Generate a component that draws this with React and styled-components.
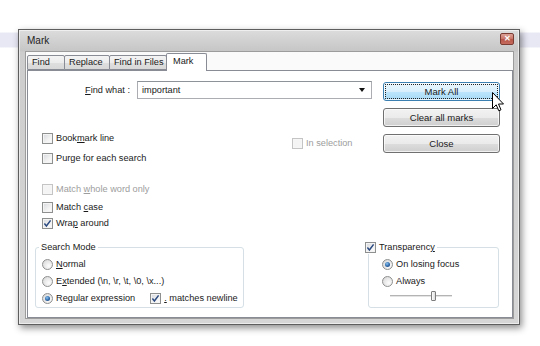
import React from "react";
import styled, { createGlobalStyle } from "styled-components";

const GlobalStyle = createGlobalStyle`
  * {
    box-sizing: border-box;
  }

  html,
  body {
    margin: 0;
    padding: 0;
  }

  body {
    width: 540px;
    height: 346px;
    overflow: hidden;
    background: linear-gradient(
      to bottom,
      #fff 0,
      #fff 32px,
      #e8e8f5 33px,
      #e8e8f5 47px,
      #fff 48px,
      #fff 100%
    );
    font-family: "Liberation Sans", Arial, sans-serif;
    font-size: 9.2px;
    color: #1a1a1a;
  }
`;

const Desktop = styled.div`
  padding: 29px 0 0 18px;
`;

const Window = styled.div`
  width: 502px;
  height: 296px;
  display: flex;
  flex-direction: column;
  border: 1px solid #5e5e5e;
  background: linear-gradient(
    to bottom,
    #dcdcdc 0,
    #c6c6c6 21px,
    #cdcdcd 22px,
    #d6d6d6 100%
  );
  box-shadow: inset 0 0 0 1px rgba(255, 255, 255, 0.55),
    2px 3px 7px rgba(0, 0, 0, 0.45);
`;

const TitleBar = styled.div`
  height: 21px;
  display: flex;
  align-items: center;
  padding: 0 5px 0 8px;
  font-size: 10px;
  color: #1e1e1e;
`;

const CloseButton = styled.div`
  width: 14px;
  height: 12px;
  margin-left: auto;
  align-self: flex-start;
  margin-top: 3px;
  border: 1px solid #7a3c33;
  border-radius: 2px;
  background: linear-gradient(to bottom, #dca196 0, #c87466 50%, #b6574a 51%, #c46a5d 100%);
  display: flex;
  align-items: center;
  justify-content: center;
  color: #fff;
  font-size: 8px;
  font-weight: bold;
  line-height: 1;
`;

const Client = styled.div`
  flex: 1;
  display: flex;
  flex-direction: column;
  margin: 0 5px 5px 6px;
  border: 1px solid #9c9c9c;
  background: #fafafa;
`;

const TabStrip = styled.div`
  height: 18px;
  display: flex;
  align-items: flex-end;
  padding-left: 1px;
`;

const Tab = styled.div`
  position: relative;
  width: ${(p) => p.$w}px;
  height: ${(p) => (p.$active ? 18 : 15)}px;
  margin-left: -1px;
  margin-bottom: ${(p) => (p.$active ? -1 : 0)}px;
  padding-left: ${(p) => (p.$active ? 6 : 4)}px;
  border: 1px solid #898c95;
  border-bottom: ${(p) => (p.$active ? "none" : "1px solid #898c95")};
  border-radius: 2px 2px 0 0;
  background: ${(p) =>
    p.$active
      ? "#fff"
      : "linear-gradient(to bottom, #f4f4f4 0, #ececec 50%, #dfdfdf 51%, #d8d8d8 100%)"};
  z-index: ${(p) => (p.$active ? 1 : 0)};
  line-height: ${(p) => (p.$active ? 15 : 13)}px;
  white-space: nowrap;

  &:first-child {
    margin-left: 0;
  }
`;

const Panel = styled.div`
  flex: 1;
  display: flex;
  flex-direction: column;
  margin-left: 1px;
  padding: 10px 12px 0 0;
  border: 1px solid #898c95;
  background: #fff;
`;

const TopSection = styled.div`
  display: flex;
  justify-content: space-between;
`;

const LeftCol = styled.div`
  width: 344px;
  display: flex;
  flex-direction: column;
`;

const FindRow = styled.div`
  display: flex;
  align-items: center;
  height: 18px;
`;

const FieldLabel = styled.label`
  width: 102px;
  margin-right: 7px;
  text-align: right;
  white-space: nowrap;
`;

const Combo = styled.div`
  width: 235px;
  height: 18px;
  display: flex;
  align-items: center;
  padding: 0 4px;
  border: 1px solid #abadb3;
  border-top-color: #8e9299;
  background: #fff;
`;

const ComboText = styled.span`
  flex: 1;
`;

const ComboArrow = styled.span`
  width: 0;
  height: 0;
  border-left: 3px solid transparent;
  border-right: 3px solid transparent;
  border-top: 4px solid #111;
  margin-right: 2px;
`;

const OptionsRow = styled.div`
  display: flex;
  margin-top: 32px;
`;

const CheckCol = styled.div`
  width: 264px;
  padding-left: 14px;
  display: flex;
  flex-direction: column;
  gap: 6px;
`;

const SideOption = styled.div`
  margin-top: 5px;
`;

const ButtonCol = styled.div`
  position: relative;
  width: 117px;
  margin-top: 1px;
  display: flex;
  flex-direction: column;
  gap: 7px;
`;

const Button = styled.div`
  position: relative;
  height: 19px;
  display: flex;
  align-items: center;
  justify-content: center;
  font-size: 9.5px;
  border: 1px solid ${(p) => (p.$hot ? "#3c7fb1" : "#707070")};
  border-radius: 3px;
  background: ${(p) =>
    p.$hot
      ? "linear-gradient(to bottom, #eaf6fd 0, #d9f0fc 50%, #bee6fd 51%, #a7d9f5 100%)"
      : "linear-gradient(to bottom, #f2f2f2 0, #ebebeb 50%, #dddddd 51%, #cfcfcf 100%)"};
  box-shadow: inset 0 0 0 1px rgba(255, 255, 255, 0.7);
  outline: ${(p) => (p.$focus ? "1px dotted #222" : "none")};
  outline-offset: -3px;
`;

const Cursor = styled.svg`
  position: absolute;
  left: 109px;
  top: 10px;
  width: 13px;
  height: 20px;
  z-index: 2;
`;

const LowerChecks = styled.div`
  display: flex;
  flex-direction: column;
  padding-left: 14px;
  margin-top: 17px;
`;

const Option = styled.div`
  height: 14px;
  display: flex;
  align-items: center;
  gap: 3px;
  margin-top: ${(p) => p.$mt || 0}px;
  white-space: nowrap;
  color: ${(p) => (p.$disabled ? "#9d9d9d" : "inherit")};
`;

const Box = styled.span`
  width: 11px;
  height: 11px;
  flex: none;
  display: flex;
  align-items: center;
  justify-content: center;
  border: 1px solid ${(p) => (p.$disabled ? "#c4c4c4" : "#8e8f8f")};
  background: ${(p) =>
    p.$disabled ? "#f4f4f4" : "linear-gradient(135deg, #d6d8dc 0, #f2f2f2 60%, #fdfdfd 100%)"};
  box-shadow: inset 0 0 0 1px ${(p) => (p.$disabled ? "#f6f6f6" : "#f4f4f4")};
`;

const Radio = styled.span`
  position: relative;
  width: 11px;
  height: 11px;
  flex: none;
  border: 1px solid #8e8f8f;
  border-radius: 50%;
  background: radial-gradient(circle at 65% 65%, #fdfdfd 0, #e6e6e6 55%, #cfcfcf 100%);

  &::after {
    content: "";
    display: ${(p) => (p.$on ? "block" : "none")};
    position: absolute;
    left: 2px;
    top: 2px;
    width: 5px;
    height: 5px;
    border-radius: 50%;
    background: radial-gradient(circle at 40% 35%, #8cc4f0 0, #2d67a8 55%, #163a6c 100%);
  }
`;

const GroupsRow = styled.div`
  display: flex;
  justify-content: space-between;
  padding-left: 7px;
  margin: 10px 1px 0 0;
`;

const Group = styled.fieldset`
  width: ${(p) => p.$w}px;
  margin: 0;
  padding: 0;
  min-width: 0;
  border: 1px solid #d5dfe5;
  border-radius: 3px;
`;

const Legend = styled.legend`
  display: flex;
  align-items: center;
  gap: 3px;
  height: 14px;
  padding: 0 2px;
  margin-left: ${(p) => p.$ml}px;
  line-height: 14px;
`;

const GroupBody = styled.div`
  display: flex;
  flex-direction: column;
  gap: 3px;
  padding: 3px 0 2px ${(p) => p.$pl}px;
`;

const Inline = styled.span`
  display: flex;
  align-items: center;
  gap: 3px;
  margin-left: 12px;
`;

const SliderRow = styled.div`
  height: 10px;
  display: flex;
  align-items: center;
  padding-left: 8px;
`;

const Track = styled.div`
  position: relative;
  width: 62px;
  height: 3px;
  border-top: 1px solid #b4b4b4;
  border-bottom: 1px solid #fff;
  background: #e4e4e4;
`;

const Thumb = styled.div`
  position: absolute;
  left: 41px;
  top: -5px;
  width: 5px;
  height: 10px;
  border: 1px solid #7d7d7d;
  border-radius: 1px;
  background: linear-gradient(to right, #fdfdfd, #dcdcdc);
`;

const Check = ({ on, disabled }) => (
  <Box $disabled={disabled}>
    {on && (
      <svg width="9" height="9" viewBox="0 0 9 9">
        <path d="M1.4 4.6 L3.4 7 L7.6 1.4" fill="none" stroke="#2b4a80" strokeWidth="1.5" />
      </svg>
    )}
  </Box>
);

const tabs = [
  { label: "Find", w: 38 },
  { label: "Replace", w: 46 },
  { label: "Find in Files", w: 58 },
  { label: "Mark", w: 41, active: true },
];

export default function App() {
  return (
    <>
      <GlobalStyle />
      <Desktop>
        <Window>
          <TitleBar>
            <span>Mark</span>
            <CloseButton>✕</CloseButton>
          </TitleBar>
          <Client>
            <TabStrip>
              {tabs.map((t) => (
                <Tab key={t.label} $w={t.w} $active={t.active}>
                  {t.label}
                </Tab>
              ))}
            </TabStrip>
            <Panel>
              <TopSection>
                <LeftCol>
                  <FindRow>
                    <FieldLabel>
                      <u>F</u>ind what :
                    </FieldLabel>
                    <Combo>
                      <ComboText>important</ComboText>
                      <ComboArrow />
                    </Combo>
                  </FindRow>
                  <OptionsRow>
                    <CheckCol>
                      <Option>
                        <Check />
                        <span>
                          Book<u>m</u>ark line
                        </span>
                      </Option>
                      <Option>
                        <Check />
                        <span>Purge for each search</span>
                      </Option>
                    </CheckCol>
                    <SideOption>
                      <Option $disabled>
                        <Check disabled />
                        <span>In selection</span>
                      </Option>
                    </SideOption>
                  </OptionsRow>
                </LeftCol>
                <ButtonCol>
                  <Button $hot $focus>
                    Mark All
                  </Button>
                  <Button>Clear all marks</Button>
                  <Button>Close</Button>
                  <Cursor viewBox="0 0 13 20">
                    <path
                      d="M0.5 0.5 L0.5 16.5 L4.2 12.8 L6.8 18.8 L9 17.8 L6.5 12 L11.5 12 Z"
                      fill="#fff"
                      stroke="#000"
                      strokeWidth="1"
                    />
                  </Cursor>
                </ButtonCol>
              </TopSection>

              <LowerChecks>
                <Option $disabled>
                  <Check disabled />
                  <span>
                    Match <u>w</u>hole word only
                  </span>
                </Option>
                <Option $mt={4}>
                  <Check />
                  <span>
                    Match <u>c</u>ase
                  </span>
                </Option>
                <Option $mt={2}>
                  <Check on />
                  <span>
                    Wra<u>p</u> around
                  </span>
                </Option>
              </LowerChecks>

              <GroupsRow>
                <Group $w={209}>
                  <Legend $ml={3}>Search Mode</Legend>
                  <GroupBody $pl={6}>
                    <Option>
                      <Radio />
                      <span>
                        <u>N</u>ormal
                      </span>
                    </Option>
                    <Option>
                      <Radio />
                      <span>
                        E<u>x</u>tended {"(\\n, \\r, \\t, \\0, \\x...)"}
                      </span>
                    </Option>
                    <Option>
                      <Radio $on />
                      <span>
                        Re<u>g</u>ular expression
                      </span>
                      <Inline>
                        <Check on />
                        <span>
                          <u>.</u> matches newline
                        </span>
                      </Inline>
                    </Option>
                  </GroupBody>
                </Group>
                <Group $w={131}>
                  <Legend $ml={-6}>
                    <Check on />
                    <span>
                      Transparenc<u>y</u>
                    </span>
                  </Legend>
                  <GroupBody $pl={13}>
                    <Option>
                      <Radio $on />
                      <span>On losing focus</span>
                    </Option>
                    <Option>
                      <Radio />
                      <span>Always</span>
                    </Option>
                    <SliderRow>
                      <Track>
                        <Thumb />
                      </Track>
                    </SliderRow>
                  </GroupBody>
                </Group>
              </GroupsRow>
            </Panel>
          </Client>
        </Window>
      </Desktop>
    </>
  );
}
